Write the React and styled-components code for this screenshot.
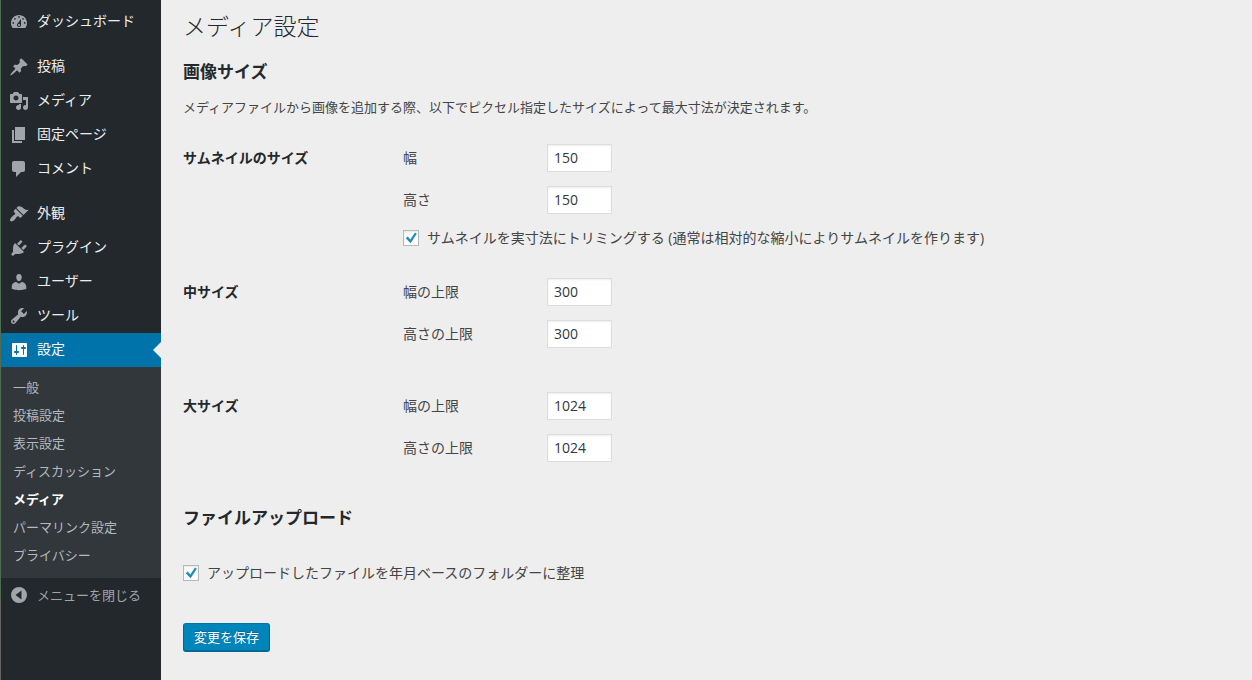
import { useState } from "react";
import styled, { createGlobalStyle } from "styled-components";

const ICONS = {
  dashboard:
    "M3.76 16h12.48c1.1-1.37 1.76-3.11 1.76-5 0-4.42-3.58-8-8-8s-8 3.58-8 8c0 1.89.66 3.63 1.76 5zM10 4.1a.85.85 0 1 1 0 1.7.85.85 0 0 1 0-1.7zM6 6a.85.85 0 1 1 0 1.7A.85.85 0 0 1 6 6zM14 6a.85.85 0 1 1 0 1.7.85.85 0 0 1 0-1.7zM4.3 10.1a.85.85 0 1 1 0 1.7.85.85 0 0 1 0-1.7zM15.7 10.1a.85.85 0 1 1 0 1.7.85.85 0 0 1 0-1.7zM8.63 11.55L12 7v6c0 1.1-.9 2-2 2s-2-.9-2-2c0-.57.24-1.08.63-1.45zM11 13c0-.55-.45-1-1-1s-1 .45-1 1 .45 1 1 1 1-.45 1-1z",
  post: "M10.44 3.02l1.82-1.82 6.36 6.35-1.83 1.82c-1.05-.68-2.48-.57-3.41.36l-.75.75c-.92.93-1.04 2.35-.35 3.41l-1.83 1.82-2.41-2.41-2.8 2.79c-.42.42-3.38 2.71-3.8 2.29s1.86-3.39 2.28-3.81l2.79-2.79L4.1 9.36l1.83-1.82c1.05.69 2.48.57 3.4-.36l.75-.75c.93-.92 1.05-2.35.36-3.41z",
  media:
    "M13 11V4c0-.55-.45-1-1-1h-1.67L9 1H5L3.67 3H2c-.55 0-1 .45-1 1v7c0 .55.45 1 1 1h10c.55 0 1-.45 1-1zM7 4.5c1.38 0 2.5 1.12 2.5 2.5S8.38 9.5 7 9.5 4.5 8.38 4.5 7 5.62 4.5 7 4.5zM14 6h5v10.5c0 1.38-1.12 2.5-2.5 2.5S14 17.88 14 16.5s1.12-2.5 2.5-2.5c.17 0 .34.02.5.05V9h-3V6zm-4 8.05V13h2v3.5c0 1.38-1.12 2.5-2.5 2.5S7 17.88 7 16.5 8.12 14 9.5 14c.17 0 .34.02.5.05z",
  page: "M6 15V2h10v13H6zm-1 1h8v2H3V5h2v11z",
  comments:
    "M5 2h9c1.1 0 2 .9 2 2v7c0 1.1-.9 2-2 2h-2l-5 5v-5H5c-1.1 0-2-.9-2-2V4c0-1.1.9-2 2-2z",
  appearance:
    "M14.48 11.06L7.41 3.99l1.5-1.5c.5-.56 2.3-.47 3.51.32 1.21.8 1.43 1.28 2.91 2.1 1.18.64 2.45 1.26 4.45.85zm-.71.71L6.7 4.7 4.93 6.47c-.39.39-.39 1.02 0 1.41l1.06 1.06c.39.39.39 1.03 0 1.42-.6.6-1.43 1.11-2.21 1.69-.35.26-.7.53-1.01.84C1.43 14.23.4 16.08 1.4 17.07c.99 1 2.84-.03 4.18-1.36.31-.31.58-.66.85-1.02.57-.78 1.08-1.61 1.69-2.21.39-.39 1.02-.39 1.41 0l1.06 1.06c.39.39 1.02.39 1.41 0z",
  plugins:
    "M13.11 4.36L9.87 7.6 8 5.73l3.24-3.24c.35-.34 1.05-.2 1.56.32.52.51.66 1.21.31 1.55zm-8 1.77l.91-1.12 9.01 9.01-1.19.84c-.71.71-2.63 1.16-3.82 1.16H6.14L4.9 17.26c-.59.59-1.54.59-2.12 0-.59-.58-.59-1.53 0-2.12l1.24-1.24v-3.88c0-1.13.4-3.19 1.09-3.89zm7.26 3.97l3.24-3.24c.34-.35 1.04-.21 1.55.31.52.51.66 1.21.31 1.55l-3.24 3.25z",
  users:
    "M10 9.25c-2.27 0-2.73-3.44-2.73-3.44C7 4.02 7.82 2 9.97 2c2.16 0 2.98 2.02 2.71 3.81 0 0-.41 3.44-2.68 3.44zm0 2.57L12.72 10c2.39 0 4.52 2.33 4.52 4.53v2.49s-3.65 1.13-7.24 1.13c-3.65 0-7.24-1.13-7.24-1.13v-2.49c0-2.25 1.94-4.48 4.47-4.48z",
  tools:
    "M16.68 9.77c-1.34 1.34-3.3 1.67-4.95.99l-5.41 6.52c-.99.99-2.59.99-3.58 0s-.99-2.59 0-3.57l6.52-5.42c-.68-1.65-.35-3.61.99-4.95 1.28-1.28 3.12-1.62 4.72-1.06l-2.89 2.89 2.82 2.82 2.86-2.87c.53 1.58.18 3.39-1.08 4.65zM3.81 16.21c.4.39 1.04.39 1.43 0 .4-.4.4-1.04 0-1.43-.39-.4-1.03-.4-1.43 0-.39.39-.39 1.03 0 1.43z",
  settings:
    "M18 16V4c0-.55-.45-1-1-1H4c-.55 0-1 .45-1 1v12c0 .55.45 1 1 1h13c.55 0 1-.45 1-1zM8 11h1c.55 0 1 .45 1 1s-.45 1-1 1H8v1.5c0 .28-.22.5-.5.5s-.5-.22-.5-.5V13H6c-.55 0-1-.45-1-1s.45-1 1-1h1V5.5c0-.28.22-.5.5-.5s.5.22.5.5V11zm6-2h-1c-.55 0-1-.45-1-1s.45-1 1-1h1V5.5c0-.28.22-.5.5-.5s.5.22.5.5V7h1c.55 0 1 .45 1 1s-.45 1-1 1h-1v5.5c0 .28-.22.5-.5.5s-.5-.22-.5-.5V9z",
  collapse: "M10 2a8 8 0 1 1 0 16 8 8 0 0 1 0-16zM12.5 5.5L6.5 10l6 4.5z",
};

const MENU = [
  [{ icon: "dashboard", label: "ダッシュボード" }],
  [
    { icon: "post", label: "投稿" },
    { icon: "media", label: "メディア" },
    { icon: "page", label: "固定ページ" },
    { icon: "comments", label: "コメント" },
  ],
  [
    { icon: "appearance", label: "外観" },
    { icon: "plugins", label: "プラグイン" },
    { icon: "users", label: "ユーザー" },
    { icon: "tools", label: "ツール" },
    { icon: "settings", label: "設定", active: true },
  ],
];

const SUBMENU = [
  "一般",
  "投稿設定",
  "表示設定",
  "ディスカッション",
  "メディア",
  "パーマリンク設定",
  "プライバシー",
];

function Icon({ name }) {
  return (
    <IconSvg viewBox="0 0 20 20" aria-hidden="true">
      <path fillRule="evenodd" d={ICONS[name]} />
    </IconSvg>
  );
}

function SizeField({ id, label, value }) {
  const [size, setSize] = useState(value);
  return (
    <FieldRow>
      <label htmlFor={id}>{label}</label>
      <NumberInput
        id={id}
        type="number"
        min="0"
        step="1"
        value={size}
        onChange={(e) => setSize(e.target.value)}
      />
    </FieldRow>
  );
}

function CheckField({ id, children }) {
  return (
    <CheckLabel htmlFor={id}>
      <CheckBox>
        <input id={id} type="checkbox" defaultChecked />
        <svg viewBox="0 0 16 16" aria-hidden="true">
          <path d="M2.8 8.2l2-1.6 2.5 2.8L12 2.6l1.8 1.2-6.2 9.4z" />
        </svg>
      </CheckBox>
      <span>{children}</span>
    </CheckLabel>
  );
}

function Sidebar() {
  return (
    <SidebarNav>
      {MENU.map((group, i) => (
        <MenuGroup key={i}>
          {group.map((item) => (
            <li key={item.icon}>
              <MenuLink href="#" $active={item.active}>
                <Icon name={item.icon} />
                <MenuText>{item.label}</MenuText>
              </MenuLink>
            </li>
          ))}
        </MenuGroup>
      ))}
      <SubMenu>
        {SUBMENU.map((label) => (
          <li key={label}>
            <SubLink href="#" $current={label === "メディア"}>
              {label}
            </SubLink>
          </li>
        ))}
      </SubMenu>
      <CollapseButton type="button">
        <Icon name="collapse" />
        <MenuText>メニューを閉じる</MenuText>
      </CollapseButton>
    </SidebarNav>
  );
}

function App() {
  return (
    <Page>
      <GlobalStyle />
      <Sidebar />
      <Main>
        <Title>メディア設定</Title>
        <form onSubmit={(e) => e.preventDefault()}>
          <SectionTitle>画像サイズ</SectionTitle>
          <Description>
            メディアファイルから画像を追加する際、以下でピクセル指定したサイズによって最大寸法が決定されます。
          </Description>
          <Settings>
            <SettingName>サムネイルのサイズ</SettingName>
            <SettingFields>
              <SizeField id="thumbnail_w" label="幅" value="150" />
              <SizeField id="thumbnail_h" label="高さ" value="150" />
              <CheckField id="thumbnail_crop">
                サムネイルを実寸法にトリミングする
                (通常は相対的な縮小によりサムネイルを作ります)
              </CheckField>
            </SettingFields>
            <SettingName>中サイズ</SettingName>
            <SettingFields>
              <SizeField id="medium_w" label="幅の上限" value="300" />
              <SizeField id="medium_h" label="高さの上限" value="300" />
            </SettingFields>
            <SettingName>大サイズ</SettingName>
            <SettingFields>
              <SizeField id="large_w" label="幅の上限" value="1024" />
              <SizeField id="large_h" label="高さの上限" value="1024" />
            </SettingFields>
          </Settings>
          <SectionTitle>ファイルアップロード</SectionTitle>
          <UploadRow>
            <CheckField id="uploads_yearmonth">
              アップロードしたファイルを年月ベースのフォルダーに整理
            </CheckField>
          </UploadRow>
          <SaveButton type="submit">変更を保存</SaveButton>
        </form>
      </Main>
    </Page>
  );
}

export default App;

const GlobalStyle = createGlobalStyle`
  * {
    box-sizing: border-box;
  }
  body {
    margin: 0;
    background: #eee;
    color: #444;
    font-family: "Open Sans", "Noto Sans CJK JP", sans-serif;
    font-size: 14px;
    line-height: 20px;
  }
  ul {
    margin: 0;
    padding: 0;
    list-style: none;
  }
`;

const Page = styled.div`
  display: flex;
  min-height: 100vh;
`;

const SidebarNav = styled.nav`
  flex: 0 0 161px;
  padding-top: 5px;
  border-left: 1px solid #4f6b53;
  border-image: linear-gradient(#4f6b53 88%, #666 88%) 1;
  background: #23282d;
`;

const MenuGroup = styled.ul`
  & + & {
    margin-top: 11px;
  }
`;

const IconSvg = styled.svg`
  flex: none;
  width: 20px;
  height: 20px;
  fill: currentColor;
`;

const MenuText = styled.span`
  padding-bottom: 2px;
`;

const MenuLink = styled.a`
  position: relative;
  display: flex;
  align-items: center;
  gap: 8px;
  height: 34px;
  padding: 0 8px;
  background: ${({ $active }) => ($active ? "#0073aa" : "transparent")};
  color: ${({ $active }) => ($active ? "#fff" : "#eee")};
  text-decoration: none;

  ${IconSvg} {
    color: ${({ $active }) => ($active ? "#fff" : "#a0a5aa")};
  }

  /* notch pointing at the open page */
  &::after {
    content: "";
    display: ${({ $active }) => ($active ? "block" : "none")};
    position: absolute;
    right: 0;
    top: 9px;
    border: 8px solid transparent;
    border-right-color: #eee;
    border-left-width: 0;
  }
`;

const SubMenu = styled.ul`
  padding: 7px 0 8px;
  background: #32373c;
`;

const SubLink = styled.a`
  display: block;
  padding: 3px 12px 5px;
  color: ${({ $current }) => ($current ? "#fff" : "#b4b9be")};
  font-size: 13px;
  font-weight: ${({ $current }) => ($current ? 600 : 400)};
  text-decoration: none;
`;

const CollapseButton = styled.button`
  display: flex;
  align-items: center;
  gap: 8px;
  width: 100%;
  height: 34px;
  padding: 0 8px;
  border: 0;
  background: none;
  color: #a0a5aa;
  font-family: inherit;
  font-size: 13px;
  cursor: pointer;
`;

const Main = styled.main`
  flex: 1;
  min-width: 0;
  padding: 11px 20px 28px 22px;
`;

const Title = styled.h1`
  margin: 0;
  color: #23282d;
  font-size: 23px;
  font-weight: 300;
  line-height: 30px;
`;

const SectionTitle = styled.h2`
  margin: 0;
  padding: 19px 0 13px;
  color: #23282d;
  font-size: 17px;
  font-weight: 600;
  line-height: 24px;
`;

const Description = styled.p`
  margin: 0;
  font-size: 13px;
`;

const Settings = styled.div`
  display: grid;
  grid-template-columns: 220px 1fr;
  row-gap: 30px;
  padding: 27px 0 11px;
`;

const SettingName = styled.div`
  padding-top: 4px;
  color: #23282d;
  font-weight: 600;
`;

const SettingFields = styled.div`
  min-width: 0;
`;

const FieldRow = styled.div`
  display: flex;
  align-items: center;
  margin-bottom: 14px;

  label {
    width: 144px;
  }
`;

const NumberInput = styled.input`
  width: 65px;
  height: 28px;
  padding: 2px 6px 4px;
  border: 1px solid #ddd;
  background: #fff;
  box-shadow: inset 0 1px 2px rgba(0, 0, 0, 0.07);
  color: #32373c;
  font-family: inherit;
  font-size: 14px;
  appearance: textfield;
`;

const CheckLabel = styled.label`
  display: flex;
  align-items: center;
  gap: 8px;
`;

const CheckBox = styled.span`
  display: grid;
  flex: none;

  input,
  svg {
    grid-area: 1 / 1;
    width: 16px;
    height: 16px;
    margin: 0;
  }
  input {
    border: 1px solid #b4b9be;
    background: #fff;
    box-shadow: inset 0 1px 2px rgba(0, 0, 0, 0.1);
    appearance: none;
  }
  svg {
    fill: #1e8cbe;
    pointer-events: none;
  }
  input:not(:checked) + svg {
    visibility: hidden;
  }
`;

const UploadRow = styled.div`
  padding: 20px 0 40px;
`;

const SaveButton = styled.button`
  height: 29px;
  padding: 0 10px 3px;
  border: 1px solid #006799;
  border-top-color: #0073aa;
  border-radius: 3px;
  background: #0085ba;
  box-shadow: inset 0 -1px 0 #006799;
  color: #fff;
  font-family: inherit;
  font-size: 13px;
  text-shadow: 0 -1px 1px #006799;
  cursor: pointer;
`;
